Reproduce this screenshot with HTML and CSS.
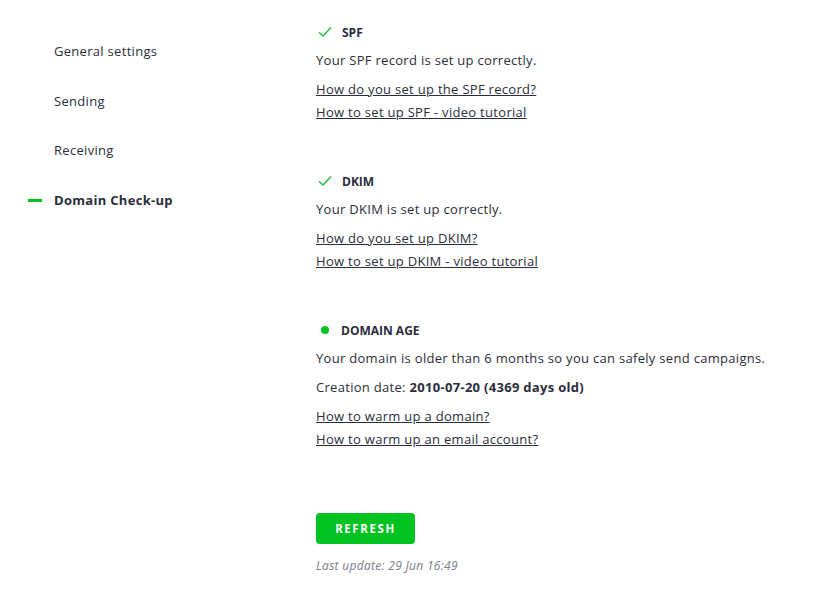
FILE: index.html
```html
<!DOCTYPE html>
<html lang="en">
<head>
    <meta charset="UTF-8">
    <title>Domain Check-up</title>
    <link rel="stylesheet" href="styles.css">
</head>
<body>
    <div class="layout">
        <!-- Settings menu -->
        <nav class="side-menu">
            <a href="#" class="menu-item">General settings</a>
            <a href="#" class="menu-item">Sending</a>
            <a href="#" class="menu-item">Receiving</a>
            <a href="#" class="menu-item active">Domain Check-up</a>
        </nav>

        <main class="checkup">
            <!-- SPF -->
            <section class="check">
                <h3 class="check-title">
                    <svg class="check-icon" width="14" height="12" viewBox="0 0 14 12"><path d="M1 6.2 L5 10 L13 1.5" fill="none" stroke="#1fbf3a" stroke-width="1.3"/></svg>
                    SPF
                </h3>
                <p class="check-text">Your SPF record is set up correctly.</p>
                <div class="check-links">
                    <a href="#">How do you set up the SPF record?</a>
                    <a href="#">How to set up SPF - video tutorial</a>
                </div>
            </section>

            <!-- DKIM -->
            <section class="check">
                <h3 class="check-title">
                    <svg class="check-icon" width="14" height="12" viewBox="0 0 14 12"><path d="M1 6.2 L5 10 L13 1.5" fill="none" stroke="#1fbf3a" stroke-width="1.3"/></svg>
                    DKIM
                </h3>
                <p class="check-text">Your DKIM is set up correctly.</p>
                <div class="check-links">
                    <a href="#">How do you set up DKIM?</a>
                    <a href="#">How to set up DKIM - video tutorial</a>
                </div>
            </section>

            <!-- Domain age -->
            <section class="check">
                <h3 class="check-title">
                    <span class="dot"></span>
                    DOMAIN AGE
                </h3>
                <p class="check-text">Your domain is older than 6 months so you can safely send campaigns.</p>
                <p class="check-text spaced">Creation date: <b>2010-07-20 (4369 days old)</b></p>
                <div class="check-links">
                    <a href="#">How to warm up a domain?</a>
                    <a href="#">How to warm up an email account?</a>
                </div>
            </section>

            <div class="refresh">
                <button class="btn-refresh">REFRESH</button>
                <p class="last-update">Last update: 29 Jun 16:49</p>
            </div>
        </main>
    </div>
</body>
</html>
```

FILE: styles.css
```css
/* General */
body {
    margin: 0;
    font-family: "Open Sans", "Liberation Sans", sans-serif;
    font-size: 13px;
    letter-spacing: 0.3px;
    color: #2b2d3c;
    background: #fff;
}

.layout {
    display: flex;
}

/* Side menu */
.side-menu {
    width: 316px;
    flex-shrink: 0;
    display: flex;
    flex-direction: column;
    gap: 29.5px;
    padding-top: 41px;
}

.menu-item {
    display: flex;
    align-items: center;
    line-height: 20px;
    padding-left: 54px;
    color: #2b2d3c;
    text-decoration: none;
    position: relative;
}

.menu-item.active {
    font-weight: 700;
}

.menu-item.active::before {
    content: "";
    position: absolute;
    left: 28px;
    top: 9px;
    width: 14px;
    height: 3px;
    background: #00c220;
}

/* Checks */
.checkup {
    padding-top: 22px;
}

.check {
    margin-bottom: 47px;
}

.check-title {
    display: flex;
    align-items: center;
    gap: 9px;
    height: 20px;
    margin: 0 0 8px;
    font-size: 12px;
    font-weight: 700;
    letter-spacing: 0;
}

.check-icon {
    margin-left: 2px;
    margin-right: 1px;
}

.dot {
    width: 8px;
    height: 8px;
    border-radius: 50%;
    background: #00c220;
    margin-left: 5px;
    margin-right: 3px;
}

.check-text {
    margin: 0 0 8px;
    line-height: 20px;
}

.check-text.spaced {
    margin-top: 9px;
}

.check-links {
    display: flex;
    flex-direction: column;
    align-items: flex-start;
}

.check-links a {
    line-height: 23px;
    color: #2b2d3c;
}

/* Refresh */
.refresh {
    padding-top: 15px;
}

.btn-refresh {
    width: 99px;
    height: 31px;
    border: 0;
    border-radius: 4px;
    background: #00c220;
    color: #fff;
    font-family: inherit;
    font-size: 11.5px;
    font-weight: 700;
    letter-spacing: 1.6px;
    cursor: pointer;
}

.last-update {
    margin: 12px 0 0;
    line-height: 20px;
    font-size: 12px;
    font-style: italic;
    color: #7b7e8c;
}
```
